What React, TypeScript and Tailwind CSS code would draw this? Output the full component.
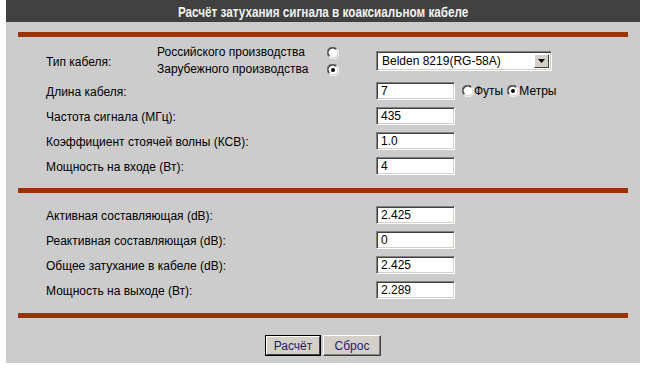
import React from "react";

const font = { fontFamily: '"Liberation Sans", Arial, sans-serif' };

function Radio({ checked }: { checked?: boolean }) {
  return (
    <svg width="12" height="12" viewBox="0 0 12 12" className="shrink-0">
      <circle cx="6" cy="6" r="5" fill="#ffffff" />
      <path d="M1.76 9.54 A5.5 5.5 0 0 1 9.54 1.76" stroke="#7a7a7a" strokeWidth="1.1" fill="none" />
      <path d="M2.46 8.83 A4.5 4.5 0 0 1 8.83 2.46" stroke="#303030" strokeWidth="1.1" fill="none" />
      <path d="M10.24 2.46 A5.5 5.5 0 0 1 2.46 10.24" stroke="#ffffff" strokeWidth="1" fill="none" />
      <path d="M9.54 3.17 A4.5 4.5 0 0 1 3.17 9.54" stroke="#d4d0c8" strokeWidth="1" fill="none" />
      {checked && <circle cx="6" cy="6" r="2" fill="#000000" />}
    </svg>
  );
}

function Field({ value }: { value: string }) {
  return (
    <div className="w-[79px] h-[18px] bg-white border border-t-[#808080] border-l-[#808080] border-b-[#ffffff] border-r-[#ffffff] shadow-[inset_1px_1px_0_#404040,inset_-1px_-1px_0_#d4d0c8] pl-[4px] text-[12px] leading-[16px] text-black">
      {value}
    </div>
  );
}

function Row({ label, value, extra }: { label: string; value: string; extra?: React.ReactNode }) {
  return (
    <div className="flex items-center h-[25px]">
      <div className="w-[358px] pl-[28px] pt-[2px] text-[12px] text-black">{label}</div>
      <Field value={value} />
      {extra}
    </div>
  );
}

function Bar() {
  return <div className="h-[5px] bg-[#993300]" />;
}

export default function App() {
  return (
    <div className="w-[653px] h-[369px] bg-white" style={font}>
      <div className="ml-[6px] w-[634px]">
        <div className="h-[22px] bg-[#404040] flex items-center justify-center">
          <span
            className="inline-block text-[#f2f2f2] text-[15px] font-bold leading-none scale-x-[0.78]"
            style={{ fontFamily: '"Liberation Sans", Arial, sans-serif' }}
          >
            Расчёт затухания сигнала в коаксиальном кабеле
          </span>
        </div>
        <div className="bg-[#cccccc] px-[12px] pt-[10px] pb-[7px]">
          <Bar />
          <div className="mt-[7px] flex items-center h-[34px] text-[12px] text-black">
            <div className="w-[139px] pl-[28px] pt-[2px]">Тип кабеля:</div>
            <div className="w-[170px] leading-[17px]">
              <div>Российского производства</div>
              <div>Зарубежного производства</div>
            </div>
            <div className="w-[49px] flex flex-col items-start gap-[5px]">
              <Radio />
              <Radio checked />
            </div>
            <div className="relative w-[176px] h-[20px] bg-white border border-t-[#808080] border-l-[#808080] border-b-[#ffffff] border-r-[#ffffff] shadow-[inset_1px_1px_0_#404040,inset_-1px_-1px_0_#d4d0c8] flex items-center pl-[5px] text-[12px]">
              <span>Belden 8219(RG-58A)</span>
              <div className="absolute right-[2px] top-[2px] w-[15px] h-[14px] bg-[#d4d0c8] border border-t-[#ffffff] border-l-[#ffffff] border-b-[#404040] border-r-[#404040] flex items-center justify-center">
                <svg width="7" height="4" viewBox="0 0 7 4">
                  <path d="M0 0 H7 L3.5 4 Z" fill="#000" />
                </svg>
              </div>
            </div>
          </div>
          <Row
            label="Длина кабеля:"
            value="7"
            extra={
              <div className="flex items-center ml-[7px] text-[12px] text-black">
                <Radio />
                <span className="mr-[4px]">Футы</span>
                <Radio checked />
                <span>Метры</span>
              </div>
            }
          />
          <Row label="Частота сигнала (МГц):" value="435" />
          <Row label="Коэффициент стоячей волны (КСВ):" value="1.0" />
          <Row label="Мощность на входе (Вт):" value="4" />
          <div className="mt-[10px]">
            <Bar />
          </div>
          <div className="mt-[9px]">
            <Row label="Активная составляющая (dB):" value="2.425" />
            <Row label="Реактивная составляющая (dB):" value="0" />
            <Row label="Общее затухание в кабеле (dB):" value="2.425" />
            <Row label="Мощность на выходе (Вт):" value="2.289" />
          </div>
          <div className="mt-[11px]">
            <Bar />
          </div>
          <div className="mt-[17px] flex justify-center gap-[2px]">
            <div className="border border-black">
              <div className="w-[54px] h-[19px] bg-[#d4d0c8] border border-t-[#ffffff] border-l-[#ffffff] border-b-[#404040] border-r-[#404040] flex items-center justify-center text-[12px] text-[#1c1c6c]">
                Расчёт
              </div>
            </div>
            <div className="w-[58px] h-[21px] bg-[#d4d0c8] border border-t-[#ffffff] border-l-[#ffffff] border-b-[#404040] border-r-[#404040] shadow-[inset_-1px_-1px_0_#808080] flex items-center justify-center text-[12px] text-[#1c1c6c]">
              Сброс
            </div>
          </div>
        </div>
      </div>
    </div>
  );
}
